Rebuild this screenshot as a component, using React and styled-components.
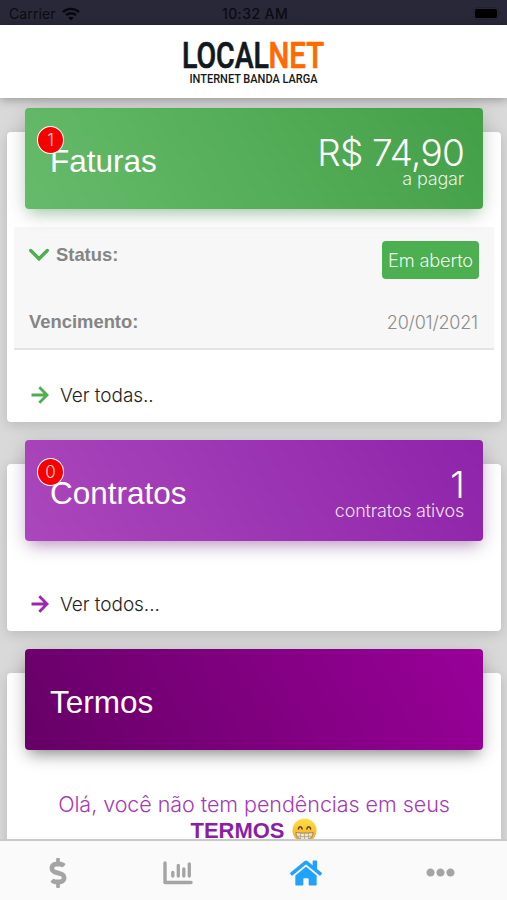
import React from 'react';
import styled, { createGlobalStyle } from 'styled-components';
import { FaDollarSign, FaHome, FaEllipsisH } from 'react-icons/fa';

const colors = {
  green: '#4caf50',
  purple: '#9c27b0',
  active: '#22a2ff',
  inactive: '#a4a4a4',
};

const GlobalStyle = createGlobalStyle`
  * {
    box-sizing: border-box;
  }

  body {
    margin: 0;
    font-family: 'Liberation Sans', Arial, sans-serif;
  }
`;

const Screen = styled.div`
  width: 507px;
  height: 900px;
  display: flex;
  flex-direction: column;
  overflow: hidden;
  background: #d9d9d9;
`;

const StatusBar = styled.div`
  height: 25px;
  flex-shrink: 0;
  display: grid;
  grid-template-columns: 1fr auto 1fr;
  align-items: center;
  padding: 2px 6px 0 9px;
  background: #282838;
  color: #0b0b12;
  font: 400 14px Inter, sans-serif;
`;

const Carrier = styled.div`
  display: flex;
  align-items: center;
  gap: 6px;
  letter-spacing: 0.1px;
`;

const Clock = styled.div`
  font-weight: 500;
  letter-spacing: 0.4px;
`;

const BatterySlot = styled.div`
  display: flex;
  justify-content: flex-end;
`;

const LogoBar = styled.header`
  height: 73px;
  flex-shrink: 0;
  display: flex;
  justify-content: center;
  background: #fff;
  box-shadow: 0 2px 9px rgba(0, 0, 0, 0.3);
  z-index: 1;
`;

const Content = styled.main`
  flex: 1;
  min-height: 0;
  overflow: hidden;
  padding: 34px 6px 0 7px;
`;

const Card = styled.section`
  height: ${props => props.height}px;
  margin-bottom: 42px;
  padding: 0 7px;
  border-radius: 4px;
  background: #fff;
  box-shadow: 0 3px 13px rgba(0, 0, 0, 0.15);
  display: flex;
  flex-direction: column;
`;

const Banner = styled.div`
  position: relative;
  height: 101.500px;
  flex-shrink: 0;
  margin: -24.500px 11.500px 0 11px;
  padding: 0 18.500px 0 25px;
  border-radius: 4px;
  display: flex;
  justify-content: space-between;
  color: #fff;
  background: linear-gradient(60deg, ${props => props.from}, ${props => props.to});
  box-shadow: 0 4px 22px rgba(0, 0, 0, 0.14), 0 8px 14px -5px ${props => props.glow};
`;

const Title = styled.h2`
  margin: 0;
  padding-top: 35.500px;
  font-size: 31.5px;
  font-weight: 400;
  line-height: 36px;
`;

const Badge = styled.span`
  position: absolute;
  left: 12px;
  top: 18px;
  width: 27px;
  height: 28px;
  border: 1px solid #fff;
  border-radius: 50%;
  background: #f90000;
  color: rgba(255, 255, 255, 0.85);
  font: 300 17px/26px Inter, sans-serif;
  text-align: center;
`;

const Summary = styled.div`
  padding-top: 23px;
  text-align: right;
  font-family: Inter, sans-serif;
  font-weight: 300;
`;

const Amount = styled.div`
  font-size: 37px;
  line-height: 44px;
  letter-spacing: -0.8px;
`;

const Caption = styled.div`
  margin-top: -6px;
  color: rgba(255, 255, 255, 0.88);
  font-size: 18px;
  line-height: 20px;
  letter-spacing: -0.2px;
`;

const Invoice = styled.div`
  height: 123px;
  margin-top: 18px;
  padding: 14px 15px 0;
  background: #f7f7f7;
  border-bottom: 2px solid #e4e4e4;
`;

const InvoiceRow = styled.div`
  display: flex;
  justify-content: space-between;
  align-items: ${props => props.align || 'center'};
  height: ${props => props.height}px;
`;

const Label = styled.div`
  display: flex;
  align-items: center;
  gap: 7px;
  color: #858585;
  font-size: 18.4px;
  font-weight: 700;
  line-height: 28px;
`;

const StatusTag = styled.div`
  width: 97px;
  height: 38px;
  border-radius: 4px;
  background: ${colors.green};
  color: rgba(255, 255, 255, 0.92);
  font: 300 18.300px/39px Inter, sans-serif;
  letter-spacing: -0.2px;
  text-align: center;
`;

const DueDate = styled.div`
  color: #8c8c8c;
  font: 300 18px Inter, sans-serif;
  letter-spacing: -0.2px;
  padding-right: 1px;
`;

const More = styled.a`
  display: flex;
  align-items: center;
  gap: 11px;
  height: 26px;
  margin: ${props => props.top}px 0 0 17px;
  color: #222;
  font: 300 19px Inter, sans-serif;
  letter-spacing: -0.05px;
`;

const Message = styled.p`
  margin: 41px 0 0;
  text-align: center;
  color: #a43ab8;
  font: 300 21.5px/26px Inter, sans-serif;
  letter-spacing: -0.05px;
`;

const Strong = styled.strong`
  font: 700 22px 'Liberation Sans', sans-serif;
  color: #8a1fa6;
`;

const TabBar = styled.nav`
  height: 61px;
  flex-shrink: 0;
  display: grid;
  grid-template-columns: 116px 123px 134px 1fr;
  border-top: 2px solid #cacaca;
  background: #fafafa;
  z-index: 1;
`;

const Tab = styled.div`
  display: flex;
  justify-content: center;
  align-items: center;
  padding-top: 4px;
  color: ${props => (props.$active ? colors.active : colors.inactive)};
  font-size: ${props => props.size}px;
`;

const Face = styled.svg`
  vertical-align: -5px;
  margin-left: 2px;
`;

const Logo = () => (
  <svg width="150" height="73" viewBox="179 25 150 73" fontFamily="Roboto, sans-serif" strokeLinejoin="round">
    <text x="182" y="68" fontSize="36" fontWeight="500" fill="#101820" stroke="#101820" strokeWidth="0.7" textLength="87" lengthAdjust="spacingAndGlyphs">LOCAL</text>
    <text x="268.500" y="68" fontSize="36" fontWeight="500" fill="#ff6a00" stroke="#ff6a00" strokeWidth="0.7" textLength="55.500" lengthAdjust="spacingAndGlyphs">NET</text>
    <text x="189.5" y="83" fontSize="12" fontWeight="500" fill="#101820" textLength="128" lengthAdjust="spacingAndGlyphs">INTERNET BANDA LARGA</text>
  </svg>
);

const Wifi = () => (
  <svg width="18" height="14" viewBox="0 0 18 14" fill="none" stroke="#07070c" strokeWidth="2.4">
    <path d="M1 5.2C5.5.8 12.5.8 17 5.2M4.1 8.2c2.8-2.7 7-2.7 9.8 0" />
    <path d="M9 13.5 6.3 10.8c1.5-1.4 3.9-1.4 5.4 0z" fill="#07070c" stroke="none" />
  </svg>
);

const Battery = () => (
  <svg width="28" height="13" viewBox="0 0 28 13">
    <rect x="0.5" y="0.5" width="25" height="12" rx="3.5" fill="none" stroke="#222230" />
    <rect x="2" y="2" width="22" height="9" rx="2" fill="#000" />
    <path d="M26.6 4.5c1.300.8 1.300 3.200 0 4z" fill="#1c1c28" />
  </svg>
);

const Chevron = () => (
  <svg width="20" height="14" viewBox="0 0 20 14" fill="none" stroke={colors.green} strokeWidth="3.4" strokeLinecap="round">
    <path d="M1.7 2.5 10 10.8 18.3 2.5" />
  </svg>
);

const Arrow = ({ color }) => (
  <svg width="18" height="18" viewBox="0 0 18 18" fill="none" stroke={color} strokeWidth="2.8">
    <path d="M0.5 9H15.5M8.300 1.300 16 9l-7.700 7.700" />
  </svg>
);

const Chart = () => (
  <svg width="30" height="24" viewBox="0 0 30 24" fill="none" stroke="currentColor" strokeLinecap="round" strokeLinejoin="round">
    <path d="M2 2v19.500h26" strokeWidth="3.400" />
    <path d="M9.800 11.500v3.500M15.300 4.500v10.500M20.800 8v7M26.300 3v12" strokeWidth="3.300" />
  </svg>
);

const Grin = () => (
  <Face width="25" height="25" viewBox="0 0 25 25">
    <defs>
      <linearGradient id="skin" x2="0" y2="1">
        <stop stopColor="#ffe04a" />
        <stop offset="1" stopColor="#f2a51d" />
      </linearGradient>
    </defs>
    <circle cx="12.5" cy="12.5" r="12" fill="url(#skin)" />
    <path d="M6.3 11c.6-3 3.300-3 3.900 0M14.800 11c.6-3 3.300-3 3.900 0" fill="none" stroke="#684016" strokeWidth="1.4" strokeLinecap="round" />
    <path d="M4 14.5c3 .8 14 .8 17 0 .5 4.5-4 7.5-8.5 7.500S3.5 19 4 14.5z" fill="#ece5d2" stroke="#927044" strokeWidth="0.8" />
    <path d="M4.5 18c5 .8 11 .8 16 0M8.5 15v6M12.5 15v7M16.5 15v6" fill="none" stroke="#a49a86" strokeWidth="0.7" />
  </Face>
);

const App = () => (
  <Screen>
    <GlobalStyle />
    <StatusBar>
      <Carrier>Carrier <Wifi /></Carrier>
      <Clock>10:32 AM</Clock>
      <BatterySlot><Battery /></BatterySlot>
    </StatusBar>
    <LogoBar>
      <Logo />
    </LogoBar>

    <Content>
      <Card height={290}>
        <Banner from="#66bb6a" to="#43a047" glow="rgba(76, 175, 80, 0.4)">
          <Title>Faturas</Title>
          <Badge>1</Badge>
          <Summary>
            <Amount>R$ 74,90</Amount>
            <Caption>a pagar</Caption>
          </Summary>
        </Banner>
        <Invoice>
          <InvoiceRow height={68} align="flex-start">
            <Label><Chevron /> Status:</Label>
            <StatusTag>Em aberto</StatusTag>
          </InvoiceRow>
          <InvoiceRow height={26}>
            <Label>Vencimento:</Label>
            <DueDate>20/01/2021</DueDate>
          </InvoiceRow>
        </Invoice>
        <More top={32}><Arrow color={colors.green} /> Ver todas..</More>
      </Card>

      <Card height={167}>
        <Banner from="#ab47bc" to="#8e24aa" glow="rgba(156, 39, 176, 0.4)">
          <Title>Contratos</Title>
          <Badge>0</Badge>
          <Summary>
            <Amount>1</Amount>
            <Caption>contratos ativos</Caption>
          </Summary>
        </Banner>
        <More top={50}><Arrow color={colors.purple} /> Ver todos...</More>
      </Card>

      <Card height={230}>
        <Banner from="#660066" to="#990099" glow="rgba(0, 0, 0, 0.4)">
          <Title>Termos</Title>
        </Banner>
        <Message>
          Olá, você não tem pendências em seus<br />
          <Strong>TERMOS</Strong> <Grin />
        </Message>
      </Card>
    </Content>

    <TabBar>
      <Tab size={30}><FaDollarSign /></Tab>
      <Tab size={30}><Chart /></Tab>
      <Tab size={32} $active><FaHome /></Tab>
      <Tab size={29}><FaEllipsisH /></Tab>
    </TabBar>
  </Screen>
);

export default App;
